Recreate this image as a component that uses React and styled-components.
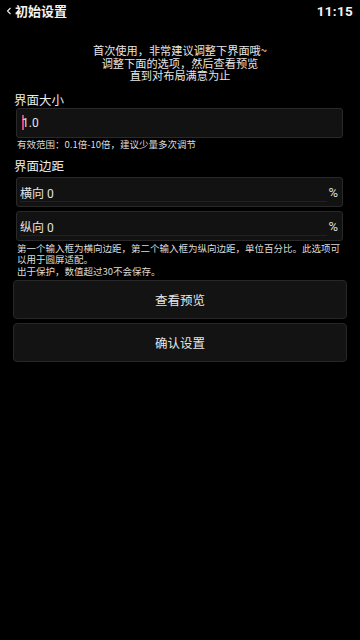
import React from "react";
import styled, { createGlobalStyle } from "styled-components";

const Global = createGlobalStyle`
  html, body { margin: 0; padding: 0; background: #000; }
  body {
    width: 360px; height: 640px; overflow: hidden;
    font-family: "Noto Sans CJK SC", "Noto Sans", Roboto, sans-serif;
    color: #e8e8e8;
  }
`;

const Page = styled.div`
  width: 360px;
  height: 640px;
  background: #000;
  display: flex;
  flex-direction: column;
`;

const Header = styled.div`
  height: 22px;
  display: flex;
  align-items: center;
  justify-content: space-between;
  padding: 0 7px 0 6px;
`;

const TitleWrap = styled.div`
  display: flex;
  align-items: center;
  gap: 3px;
`;

const Title = styled.span`
  font-size: 13px;
  font-weight: 700;
  color: #f2f2f2;
  line-height: 16px;
`;

const Clock = styled.span`
  font-family: Roboto, "Noto Sans", sans-serif;
  font-size: 13.5px;
  font-weight: 700;
  color: #f4f4f4;
  letter-spacing: 0.3px;
`;

const Intro = styled.div`
  margin-top: 22px;
  text-align: center;
  font-size: 11.2px;
  line-height: 12.5px;
  color: #e6e6e6;
`;

const Label = styled.div`
  margin: ${(p) => p.$top}px 0 0 14px;
  font-size: 12.5px;
  line-height: 16px;
  color: #ececec;
`;

const Field = styled.div`
  position: relative;
  box-sizing: border-box;
  margin: ${(p) => p.$top}px 17px 0 16px;
  height: 30px;
  background: #121212;
  border: 1px solid #292929;
  border-radius: 3px;
  display: flex;
  align-items: center;
  padding: 0 4px 0 ${(p) => p.$pl}px;
  font-size: 12px;
  color: #e4e4e4;
`;

const FieldText = styled.span`
  flex: 1;
  font-family: Roboto, "Noto Sans CJK SC", sans-serif;
  display: flex;
  align-items: center;
`;

const Caret = styled.span`
  display: inline-block;
  width: 1.5px;
  height: 15px;
  background: #d04a7e;
  margin-right: -1.5px;
`;

const Unit = styled.span`
  font-family: Roboto, sans-serif;
  font-size: 13px;
  color: #dcdcdc;
`;

const Underline = styled.div`
  position: absolute;
  left: 3px;
  right: 15px;
  bottom: 4px;
  height: 1px;
  background: #212121;
`;

const Hint = styled.div`
  margin: ${(p) => p.$top}px 16px 0 17px;
  font-size: 9.5px;
  line-height: 11.5px;
  color: #dcdcdc;
  font-family: "Noto Sans CJK SC", Roboto, sans-serif;
`;

const Button = styled.button`
  box-sizing: border-box;
  margin: ${(p) => p.$top}px 13px 0 13px;
  height: ${(p) => p.$h}px;
  background: #131313;
  border: 1px solid #272727;
  border-radius: 4px;
  color: #e6e6e6;
  font-family: "Noto Sans CJK SC", sans-serif;
  font-size: 12.5px;
  display: flex;
  align-items: center;
  justify-content: center;
  padding: 0;
`;

const Back = () => (
  <svg width="6" height="8" viewBox="0 0 6 8">
    <path d="M4.5 1 L1.5 4 L4.5 7" fill="none" stroke="#eee" strokeWidth="1.1" />
  </svg>
);

export default function App() {
  return (
    <>
      <Global />
      <Page>
        <Header>
          <TitleWrap>
            <Back />
            <Title>初始设置</Title>
          </TitleWrap>
          <Clock>11:15</Clock>
        </Header>
        <Intro>
          首次使用，非常建议调整下界面哦~
          <br />
          调整下面的选项，然后查看预览
          <br />
          直到对布局满意为止
        </Intro>
        <Label $top={10}>界面大小</Label>
        <Field $top={0} $pl={5}>
          <FieldText>
            <Caret />
            1.0
          </FieldText>
        </Field>
        <Hint $top={1}>有效范围：0.1倍-10倍，建议少量多次调节</Hint>
        <Label $top={8}>界面边距</Label>
        <Field $top={3} $pl={3}>
          <FieldText>横向 0</FieldText>
          <Unit>%</Unit>
          <Underline />
        </Field>
        <Field $top={4} $pl={3}>
          <FieldText>纵向 0</FieldText>
          <Unit>%</Unit>
          <Underline />
        </Field>
        <Hint $top={1.5}>
          第一个输入框为横向边距，第二个输入框为纵向边距，单位百分比。此选项可以用于圆屏适配。
          <br />
          出于保护，数值超过30不会保存。
        </Hint>
        <Button $top={3} $h={39}>查看预览</Button>
        <Button $top={4} $h={39}>确认设置</Button>
      </Page>
    </>
  );
}
